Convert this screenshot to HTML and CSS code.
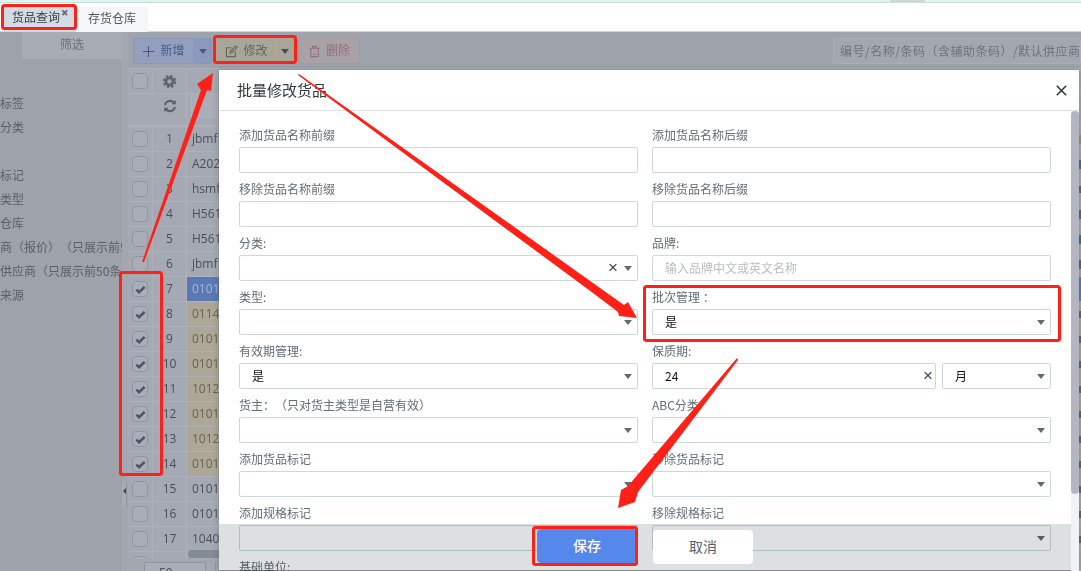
FILE: index.html
```html
<!DOCTYPE html>
<html lang="zh">
<head>
<meta charset="utf-8">
<title>货品查询</title>
<link rel="stylesheet" href="styles.css">
</head>
<body>
<div class="page">
  <div class="topstrip"><span class="topwidget"></span></div>
  <nav class="tabs">
    <div class="tab tab-active">货品查询<span class="tab-x">✖</span></div>
    <div class="tab tab-plain">存货仓库</div>
  </nav>
  <main class="main">
    <aside class="sidebar">
      <div class="side-tab">筛选</div>
      <ul class="side-list">
        <li>标签</li><li>分类</li><li>&nbsp;</li><li>标记</li><li>类型</li><li>仓库</li>
        <li>商（报价）（只展示前50条</li><li>供应商（只展示前50条）</li><li>来源</li>
      </ul>
    </aside>
    <div class="splitter"><span class="handle"><i class="handle-arrow"></i></span></div>
    <section class="content">
      <div class="toolbar">
        <div class="btn-group group-new">
          <button class="btn"><svg class="ico" viewBox="0 0 14 14"><path d="M7 1v12M1 7h12"/></svg>新增</button>
          <button class="btn-caret"><i class="caret caret-new"></i></button>
        </div>
        <div class="btn-group group-edit">
          <button class="btn"><svg class="ico" viewBox="0 0 14 14"><path d="M11 7v5.500H1.500V3H7"/><path d="M5.500 8.500l.5-2L11.500 1l1.500 1.500L7.500 8z"/></svg>修改</button>
          <button class="btn-caret"><i class="caret caret-edit"></i></button>
        </div>
        <button class="btn btn-del"><svg class="ico" viewBox="0 0 14 14"><path d="M1.500 3.500h11M5 3.500V1.500h4v2M3 3.500v9h8v-9M5.500 10h3"/></svg>删除</button>
        <div class="search">编号/名称/条码（含辅助条码）/默认供应商</div>
      </div>
      <div class="grid">
        <div class="h-row h-one">
          <div class="c-chk"><span class="chk"></span></div>
          <div class="c-idx"><svg class="gear" viewBox="0 0 16 16"><circle cx="8" cy="8" r="3.700"/><circle class="teeth" cx="8" cy="8" r="5.900"/></svg></div>
          <div class="c-code"></div>
        </div>
        <div class="h-row h-two">
          <div class="c-chk"></div>
          <div class="c-idx"><svg class="refresh" viewBox="0 0 14 14"><path d="M2 6a5.200 5.200 0 0 1 9-2.300"/><path class="tip" d="M12.800 1v4.300H8.500z"/><path d="M12 8a5.200 5.200 0 0 1-9 2.300"/><path class="tip" d="M1.200 13V8.700h4.300z"/></svg></div>
          <div class="c-code"><span class="h-input"></span></div>
        </div>
        <div class="g-body">
          <div class="row"><div class="c-chk"><span class="chk"></span></div><div class="c-idx">1</div><div class="c-code">jbmf12</div><i class="sliver s-gold"></i></div>
          <div class="row"><div class="c-chk"><span class="chk"></span></div><div class="c-idx">2</div><div class="c-code">A20201</div><i class="sliver s-blue"></i></div>
          <div class="row"><div class="c-chk"><span class="chk"></span></div><div class="c-idx">3</div><div class="c-code">hsmf01</div><i class="sliver s-dark"></i></div>
          <div class="row"><div class="c-chk"><span class="chk"></span></div><div class="c-idx">4</div><div class="c-code">H56101</div><i class="sliver s-blue"></i></div>
          <div class="row"><div class="c-chk"><span class="chk"></span></div><div class="c-idx">5</div><div class="c-code">H56102</div><i class="sliver s-blue"></i></div>
          <div class="row"><div class="c-chk"><span class="chk"></span></div><div class="c-idx">6</div><div class="c-code">jbmf13</div><i class="sliver s-blue"></i></div>
          <div class="row"><div class="c-chk"><span class="chk chk-on"><svg viewBox="0 0 12 12"><path d="M1.500 6.200l3 2.800 6-5.800"/></svg></span></div><div class="c-idx">7</div><div class="c-code code-active">010101</div><i class="sliver s-fill"></i></div>
          <div class="row"><div class="c-chk"><span class="chk chk-on"><svg viewBox="0 0 12 12"><path d="M1.500 6.200l3 2.800 6-5.800"/></svg></span></div><div class="c-idx">8</div><div class="c-code code-tan">011401</div><i class="sliver s-dark"></i></div>
          <div class="row"><div class="c-chk"><span class="chk chk-on"><svg viewBox="0 0 12 12"><path d="M1.500 6.200l3 2.800 6-5.800"/></svg></span></div><div class="c-idx">9</div><div class="c-code code-tan">010102</div><i class="sliver s-dark"></i></div>
          <div class="row"><div class="c-chk"><span class="chk chk-on"><svg viewBox="0 0 12 12"><path d="M1.500 6.200l3 2.800 6-5.800"/></svg></span></div><div class="c-idx">10</div><div class="c-code code-tan">010103</div><i class="sliver s-dark"></i></div>
          <div class="row"><div class="c-chk"><span class="chk chk-on"><svg viewBox="0 0 12 12"><path d="M1.500 6.200l3 2.800 6-5.800"/></svg></span></div><div class="c-idx">11</div><div class="c-code code-tan">101201</div><i class="sliver s-dark"></i></div>
          <div class="row"><div class="c-chk"><span class="chk chk-on"><svg viewBox="0 0 12 12"><path d="M1.500 6.200l3 2.800 6-5.800"/></svg></span></div><div class="c-idx">12</div><div class="c-code code-tan">010104</div><i class="sliver s-dark"></i></div>
          <div class="row"><div class="c-chk"><span class="chk chk-on"><svg viewBox="0 0 12 12"><path d="M1.500 6.200l3 2.800 6-5.800"/></svg></span></div><div class="c-idx">13</div><div class="c-code code-tan">101202</div><i class="sliver s-dark"></i></div>
          <div class="row"><div class="c-chk"><span class="chk chk-on"><svg viewBox="0 0 12 12"><path d="M1.500 6.200l3 2.800 6-5.800"/></svg></span></div><div class="c-idx">14</div><div class="c-code code-tan">010105</div><i class="sliver s-dark"></i></div>
          <div class="row"><div class="c-chk"><span class="chk"></span></div><div class="c-idx">15</div><div class="c-code">010106</div><i class="sliver s-dark"></i></div>
          <div class="row"><div class="c-chk"><span class="chk"></span></div><div class="c-idx">16</div><div class="c-code">010107</div><i class="sliver s-dark"></i></div>
          <div class="row"><div class="c-chk"><span class="chk"></span></div><div class="c-idx">17</div><div class="c-code">104001</div><i class="sliver s-dark"></i></div>
          <div class="row"><div class="c-chk"><span class="chk"></span></div><div class="c-idx"></div><div class="c-code"></div></div>
          <span class="h-scroll"></span>
        </div>
        <div class="pager"><span class="page-size">50</span><span class="page-sep"></span></div>
      </div>
    </section>

    <div class="modal">
      <header class="modal-head">
        <h2 class="modal-title">批量修改货品</h2>
        <svg class="modal-close" viewBox="0 0 11 11"><path d="M.8.800l9.400 9.400M10.200.800L.8 10.200"/></svg>
      </header>
      <div class="modal-body">
        <div class="form">
          <div class="field"><div class="label">添加货品名称前缀</div><div class="control"></div></div>
          <div class="field"><div class="label">添加货品名称后缀</div><div class="control"></div></div>
          <div class="field"><div class="label">移除货品名称前缀</div><div class="control"></div></div>
          <div class="field"><div class="label">移除货品名称后缀</div><div class="control"></div></div>
          <div class="field"><div class="label">分类:</div><div class="control"><span class="clear">×</span><i class="arrow"></i></div></div>
          <div class="field"><div class="label">品牌:</div><div class="control placeholder">输入品牌中文或英文名称</div></div>
          <div class="field"><div class="label">类型:</div><div class="control"><i class="arrow"></i></div></div>
          <div class="field"><div class="label">批次管理 ：</div><div class="control">是<i class="arrow"></i></div></div>
          <div class="field"><div class="label">有效期管理:</div><div class="control">是<i class="arrow"></i></div></div>
          <div class="field">
            <div class="label">保质期:</div>
            <div class="pair">
              <div class="control control-grow">24<span class="clear">×</span></div>
              <div class="control control-unit">月<i class="arrow"></i></div>
            </div>
          </div>
          <div class="field"><div class="label">货主：（只对货主类型是自营有效）</div><div class="control"><i class="arrow"></i></div></div>
          <div class="field"><div class="label">ABC分类</div><div class="control"><i class="arrow"></i></div></div>
          <div class="field"><div class="label">添加货品标记</div><div class="control"><i class="arrow"></i></div></div>
          <div class="field"><div class="label">移除货品标记</div><div class="control"><i class="arrow"></i></div></div>
          <div class="field"><div class="label">添加规格标记</div><div class="control"><i class="arrow"></i></div></div>
          <div class="field"><div class="label">移除规格标记</div><div class="control"><i class="arrow"></i></div></div>
          <div class="field"><div class="label">基础单位:</div><div class="control"></div></div>
        </div>
        <div class="scrollbar"><span class="scroll-thumb"></span></div>
      </div>
      <footer class="modal-foot">
        <button class="foot-btn foot-save">保存</button>
        <button class="foot-btn foot-cancel">取消</button>
      </footer>
    </div>
  </main>

  <svg class="marks" viewBox="0 0 1081 571">
    <rect class="box" x="2.500" y="5.500" width="73" height="23" rx="2"/>
    <rect class="box" x="214.500" y="36.500" width="81" height="26" rx="2"/>
    <rect class="box" x="120.500" y="272.500" width="41" height="202" rx="2"/>
    <rect class="box" x="644.500" y="286.500" width="415" height="54" rx="2"/>
    <rect class="box" x="533.500" y="527.500" width="103" height="37" rx="2"/>
    <polygon class="arrow-shape" points="142,262 201,90 197,84 213,73 211,91 207,90 144,262"/>
    <polygon class="arrow-shape" points="298,75 299,74 593,283 624,305 628,302 637,318 619,316 618,312 593,293"/>
    <polygon class="arrow-shape" points="737,358 738,360 638,492 635,502 618,508 621,490 628,486"/>
  </svg>
</div>
</body>
</html>
```
FILE: styles.css
```css
* { box-sizing: border-box; }
html, body { margin: 0; height: 100%; overflow: hidden; background: #fff; }
body { font: 12px/1.4 "Open Sans", "Noto Sans CJK SC", sans-serif; color: #4a4e5a; text-spacing-trim: space-all; }
button { font: inherit; padding: 0; cursor: default; }
ul { list-style: none; margin: 0; padding: 0; }
h2 { margin: 0; font-weight: 400; }

.page { position: relative; display: flex; flex-direction: column; width: 1081px; height: 571px; overflow: hidden; }

.topstrip { flex: none; height: 3px; background: #dcf6f0; border-bottom: 1px solid #c9dcd9; padding-left: 890px; }
.topwidget { display: block; width: 35px; height: 2px; background: #d5d5d5; }

.tabs { flex: none; display: flex; height: 29px; padding-left: 4px; background: #fff; border-bottom: 1px solid #d3d9d9; }
.tab { position: relative; width: 72px; margin-top: 4px; line-height: 24px; text-align: center; color: #3a3f46; }
.tab-active { background: #d3dbe4; padding-right: 16px; padding-left: 8px; margin-top: 3px; }
.tab-plain { background: #f5f6f8; color: #50565e; padding-left: 0; height: 25px; }
.tab-x { position: absolute; right: 7px; top: 1px; font-size: 9px; color: #6c727c; line-height: 12px; }

.main { position: relative; flex: 1; min-height: 0; display: flex; background: #9fa4ac; }

.sidebar { flex: none; width: 122px; background: #9da2ab; overflow: hidden; color: #5a5f69; }
.side-tab { margin-left: 22px; height: 27px; line-height: 25px; text-align: center; background: #a8acb5; color: #6c7078; }
.side-list { margin-top: 32px; }
.side-list li { height: 24px; line-height: 24px; white-space: nowrap; overflow: hidden; font-family: "Noto Sans CJK SC", sans-serif; }

.splitter { flex: none; width: 6px; background: #a3a7b0; position: relative; }
.handle { position: absolute; left: 0; top: 450px; width: 5px; height: 26px; background: #a8acb5; border-right: 1px solid #8f949e; clip-path: polygon(0 0, 100% 0, 100% 100%, 0 80%); }
.handle-arrow { position: absolute; left: 1px; top: 6px; border: 3px solid transparent; border-left-width: 0; border-right: 3px solid #3f4350; }

.content { flex: 1; min-width: 0; overflow: hidden; }

.toolbar { display: flex; align-items: stretch; gap: 4px; height: 32px; padding: 6px 0 0 5px; }
.toolbar > * { flex: none; }
.btn-group { display: flex; height: 26px; border-radius: 2px; }
.btn, .btn-caret { flex: none; height: 26px; border: 1px solid; border-radius: 2px 0 0 2px; display: flex; align-items: center; }
.btn { width: 61px; justify-content: center; gap: 5px; font-size: 12px; }
.btn-caret { width: 18px; justify-content: center; border-radius: 0 2px 2px 0; border-left: 0; }
.ico { width: 13px; height: 13px; fill: none; stroke: currentColor; stroke-width: 1.200; flex: none; }
.caret { border-style: solid; border-width: 5px 4.500px 0; border-color: #4a5a80 transparent transparent; }
.caret-edit { border-top-color: #474d60; }
.group-new .btn { background: #949fbe; border-color: #8796bb; color: #47598a; }
.group-new .btn-caret { background: #8b99bf; border-color: #8796bb; }
.group-edit .btn { background: #a8a699; border-color: #a8a699; color: #66645c; border-right: 1px solid #b5a88a; }
.group-edit .btn-caret { width: 17px; background: #a8a699; border-color: #a8a699; }
.btn-del { width: 62px; background: #a6a2a8; border-color: #ad959d; color: #996c78; border-radius: 2px; }
.search { width: 248px; margin-left: 469px; height: 26px; line-height: 24px; padding: 0 5px 0 6px; border: 1px solid #aaaeb8; border-radius: 2px; background: #a3a7b0; color: #6e7279; white-space: nowrap; overflow: hidden; letter-spacing: .5px; font-family: "Noto Sans CJK SC", sans-serif; }

.grid { margin-top: 4px; border-top: 1px solid #adb1b9; }
.h-row, .row { display: flex; background: #a5a9b3; border-bottom: 1px solid #adb1b9; }
.h-one { height: 25px; }
.h-two { height: 33px; border-bottom-width: 2px; }
.row { height: 25px; align-items: stretch; position: relative; }
.c-chk { flex: none; width: 25px; display: flex; align-items: center; padding-left: 4px; border-right: 1px solid #adb1b9; }
.h-two .c-chk { border-right: 0; }
.c-idx { flex: none; width: 34px; line-height: 24px; text-align: center; border-right: 1px solid #adb1b9; display: flex; align-items: center; justify-content: center; }
.c-code { flex: 1; line-height: 24px; padding-left: 5px; white-space: nowrap; overflow: hidden; }
.chk { display: flex; align-items: center; justify-content: center; width: 16px; height: 16px; border: 1px solid #9095a1; border-radius: 4px; background: #a9adb7; }
.chk-on svg { width: 11px; height: 11px; fill: none; stroke: #4d5366; stroke-width: 2.800; }
.code-active { background: #5a79b6; color: #a8b5d3; }
.code-tan { background: #ada797; color: #69634f; }
.h-input { display: block; width: 100px; height: 24px; margin: 0 0 0 -1px; border: 1px solid #adb1b9; background: #a9adb7; }
.gear { width: 15px; height: 15px; fill: none; stroke: #5f646f; }
.gear circle { stroke-width: 2.800; }
.gear .teeth { stroke-width: 2.400; stroke-dasharray: 2.700 1.930; }
.refresh { width: 14px; height: 14px; fill: none; stroke: #5a5f6b; stroke-width: 2; margin-top: -8px; }
.refresh .tip { fill: #5a5f6b; stroke: none; }
.sliver { position: absolute; right: 0; top: 8px; width: 2px; height: 9px; }
.s-gold { background: #a98d50; }
.s-blue { background: #4f6496; }
.s-dark { background: #5f616a; height: 7px; top: 9px; }
.s-fill { background: #5a79b6; top: 0; height: 24px; }

.g-body { position: relative; height: 432px; overflow: hidden; }
.h-scroll { position: absolute; left: 60px; top: 423px; width: 400px; height: 8px; border-radius: 4px; background: #858a97; }
.pager { display: flex; align-items: flex-start; height: 20px; padding: 3px 0 0 16px; background: #a3a7b0; }
.page-size { width: 62px; height: 24px; padding-left: 14px; line-height: 20px; border: 1px solid #8f94a0; border-radius: 2px; background: #a9adb7; }
.page-sep { width: 1px; height: 20px; margin-left: 9px; background: #8f94a0; }

.modal { position: absolute; left: 219px; top: 38px; right: 2px; bottom: 0; display: flex; flex-direction: column; background: #fff; box-shadow: 0 0 6px rgba(60, 64, 72, .35); overflow: hidden; }
.modal-head { flex: none; display: flex; align-items: center; justify-content: space-between; height: 41px; padding: 0 12px 0 18px; border-bottom: 1px solid #dde3e4; }
.modal-title { font: 15px/20px "Noto Sans CJK SC", sans-serif; color: #303a42; }
.modal-close { width: 11px; height: 11px; fill: none; stroke: #2c3036; stroke-width: 1.500; }
.modal-body { flex: 1; min-height: 0; display: flex; overflow: hidden; }
.form { flex: none; width: 852px; padding: 12px 0 0 20px; display: grid; grid-template-columns: 399px 399px; grid-auto-rows: 54px; column-gap: 14px; font-family: "Noto Sans CJK SC", sans-serif; }
.field { min-width: 0; }
.label { height: 24px; line-height: 24px; color: #626d76; white-space: nowrap; }
.control { position: relative; height: 26px; line-height: 24px; padding-left: 12px; border: 1px solid #cdd8dc; border-radius: 2px; color: #111; background: #fff; font-size: 12px; }
.placeholder { color: #b9bdc1; padding-left: 12px; }
.arrow { position: absolute; right: 5px; top: 10px; border-style: solid; border-width: 5px 4.500px 0; border-color: #5f6b72 transparent transparent; }
.clear { position: absolute; right: 21px; top: 0; width: 8px; text-align: center; font: 17px/24px "Liberation Sans", sans-serif; color: #3e4650; }
.pair { display: flex; gap: 6px; }
.control-grow { flex: 1; }
.control-grow .clear { right: 4px; }
.control-unit { flex: none; width: 109px; }
.scrollbar { flex: none; width: 8px; background: #f1f2f5; }
.scroll-thumb { display: block; height: 383px; border-radius: 4px; background: #b3b6c0; }
.modal-foot { position: absolute; left: 0; right: 8px; bottom: 0; height: 47px; display: flex; padding: 5px 0 0 318px; gap: 16px; }
.modal-foot::before { content: ""; position: absolute; inset: 0; background: #dde0e1; mix-blend-mode: multiply; border-bottom: 1px solid #8a8d90; }
.foot-btn { position: relative; height: 34px; border: 0; border-radius: 4px; font-size: 14px; font-family: "Noto Sans CJK SC", sans-serif; }
.foot-save { width: 100px; background: #5588ea; color: #fff; font-weight: 500; }
.foot-cancel { width: 100px; margin-top: 1px; background: #fff; color: #5a6068; }

.marks { position: absolute; left: 0; top: 0; width: 1081px; height: 571px; pointer-events: none; }
.box { fill: none; stroke: #ff2018; stroke-width: 3; }
.arrow-shape { fill: #ff2018; }
```
